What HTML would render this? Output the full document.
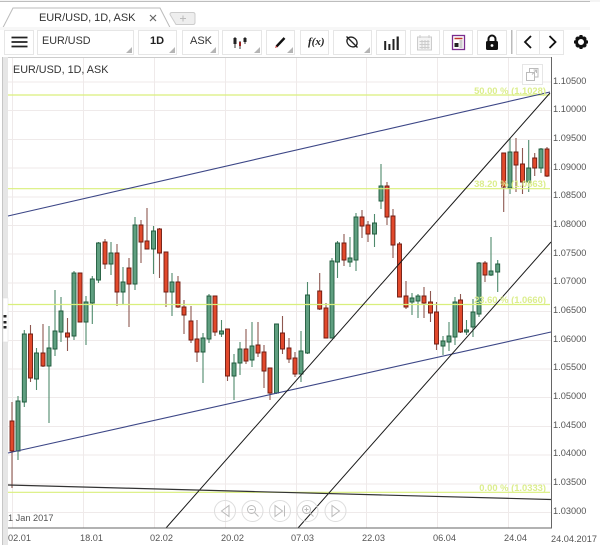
<!DOCTYPE html>
<html><head><meta charset="utf-8"><style>
html,body{margin:0;padding:0;background:#fff}
#p{position:relative;width:600px;height:545px;overflow:hidden;background:#fff;font-family:"Liberation Sans",sans-serif;filter:blur(.3px)}
.b{position:absolute;top:30px;height:23px;border:1px solid #e6e6e6;box-sizing:content-box;background:#fff}
.t{position:absolute;white-space:nowrap;color:#333}
.y{position:absolute;left:553px;font-size:9.2px;line-height:12px;color:#555;letter-spacing:.02px}
.x{position:absolute;top:532px;font-size:9.2px;line-height:12px;color:#555}
.f{position:absolute;font-size:9.4px;line-height:12px;font-weight:bold;color:#dcee8e;white-space:nowrap;text-align:right;right:54px}
svg{position:absolute;left:0;top:0}
</style></head><body><div id="p">
<svg width="600" height="545" viewBox="0 0 600 545">
<rect x="0" y="0" width="600" height="2" fill="#f4f4f4"/><rect x="0" y="1" width="590" height="1" fill="#bdbdbd"/>
<path d="M3 27.500L13 8H160L170 27.500" fill="#fff" stroke="#bbb"/>
<path d="M170 14.500q0-2 2-2H193q2 0 2 2v8q0 2-2 2H176z" fill="#eee" stroke="#ccc"/>
<path d="M180 18.500h6M183 15.500v6" stroke="#bbb" fill="none"/>
<path d="M150 15l6 6M156 15l-6 6" stroke="#666" stroke-width="1.200"/>
<rect x="0" y="27" width="590" height="3" fill="#f7f7f7"/>
<rect x="8" y="57" width="543" height="471" fill="#fff"/>
<rect x="0" y="57" width="2" height="488" fill="#fff"/>
<rect x="2" y="57" width="6" height="488" fill="#e6e6e6"/><rect x="2" y="57" width="1" height="488" fill="#c6c6c6"/>
<rect x="3" y="298" width="5" height="44" fill="#fff" stroke="#ddd" stroke-width=".5"/>
<rect x="3.500" y="315" width="3" height="2.500" fill="#222"/><rect x="3.500" y="321" width="3" height="2.500" fill="#222"/><rect x="3.500" y="326" width="3" height="2.500" fill="#222"/>
<g stroke="#efeaea" fill="none">
<path d="M12.500 57V528M83.500 57V528M154.500 57V528M225.500 57V528M296.500 57V528M366.500 57V528M437.500 57V528M508.500 57V528"/>
<path d="M8 82H551M8 110.500H551M8 139.500H551M8 168H551M8 197H551M8 225.500H551M8 254H551M8 283H551M8 311.500H551M8 340.500H551M8 369H551M8 397.500H551M8 426.500H551M8 455H551M8 484H551M8 512.500H551"/>
</g>
<rect x="8" y="57" width="543" height="1" fill="#ccc"/>
<g>
<path fill="none" stroke="#4f8a6c" stroke-width="1.100" d="M18 396V460M24.300 330V407M36.500 348V390M49 326V423M55 290V356M61 297V342M74 271V340M86 296V345M92.300 276V324M98.500 242V283M111 242V275M123 267V304M135 217V290M153.500 226V274M172 273V316M203 333V383M209 294V343M221.500 320V337M234 354V400M240 342V375M252 322V367M276.500 324V394M301 331V382M307.500 282V354M332 258V338M337.500 241V278M350 237V267M356 213V271M374.500 214V247M381 164V209M412 293V315M418 294V318M443 336V355M449 322V351M455 297V345M466.500 320V335M473 299V337M479 262V317M491 237V276M497.700 260V292M510 138V194M528.700 140V192M541 148V173"/>
<path fill="none" stroke="#8e5850" stroke-width="1.100" d="M12 402V488M30.500 325V382M43 324V367M67.500 318V351M80 273V322M105 239V269M117 244V306M129 258V327M141 220V263M147 208V249M159.500 228V278M166 252V307M178 276V308M184 300V334M191 306V343M197 320V362M215 296V336M227.500 329V381M246 329V364M258 322V357M264 345V388M270 368V400M282.500 316V354M289 338V363M295 352V377M319.700 273V310M326 303V338M344 234V266M362 210V238M368 221V242M387 182V225M393 209V258M399.500 242V297M406 281V309M424 287V318M430.500 291V322M436.500 302V350M460.500 294V333M485 261V282M503.700 153V212M516 138V192M522.500 148V194M534.700 153V176M547 147V177"/>
<path fill="#5f9f80" stroke="#1f5a3c" stroke-width=".9" d="M16 401h4v50h-4zM22.300 334h4v68h-4zM34.500 353h4v26h-4zM47 348h4v18h-4zM53 331h4v18h-4zM59 311h4v21h-4zM72 273h4v63h-4zM84 302h4v20h-4zM90.300 279h4v24h-4zM96.500 243h4v37h-4zM109 253h4v11h-4zM121 282h4v10h-4zM133 225h4v59h-4zM151.500 231h4v18h-4zM170 282h4v10h-4zM201 338h4v14h-4zM207 296h4v43h-4zM219.500 331h4v3h-4zM232 363h4v13h-4zM238 349h4v14h-4zM250 346h4v14h-4zM274.500 324h4v69h-4zM299 351h4v23h-4zM305.500 295h4v58h-4zM330 261h4v77h-4zM335.500 243h4v19h-4zM348 258h4v4h-4zM354 217h4v43h-4zM372.500 223h4v11h-4zM379 186h4v15h-4zM410 298h4v4h-4zM416 296h4v5h-4zM441 341h4v5h-4zM447 336h4v6h-4zM453 302h4v35h-4zM464.500 330h4v2h-4zM471 312h4v15h-4zM477 263h4v51h-4zM489 271h4v4h-4zM495.700 264h4v8h-4zM508 152h4v36h-4zM526.700 168h4v14h-4zM539 149h4v19h-4z"/>
<path fill="#e2492c" stroke="#6e1a10" stroke-width=".9" d="M10 421h4v30h-4zM28.500 334h4v44h-4zM41 353h4v13h-4zM65.500 333h4v4h-4zM78 273h4v49h-4zM103 242h4v22h-4zM115 253h4v39h-4zM127 268h4v16h-4zM139 225h4v17h-4zM145 241h4v8h-4zM157.500 229h4v24h-4zM164 252h4v40h-4zM176 282h4v25h-4zM182 307h4v8h-4zM189 321h4v19h-4zM195 339h4v13h-4zM213 296h4v36h-4zM225.500 329h4v47h-4zM244 349h4v12h-4zM256 345h4v8h-4zM262 352h4v19h-4zM268 368h4v25h-4zM280.500 333h4v16h-4zM287 348h4v11h-4zM293 358h4v16h-4zM317.700 291h4v18h-4zM324 308h4v30h-4zM342 243h4v17h-4zM360 217h4v9h-4zM366 225h4v9h-4zM385 186h4v31h-4zM391 216h4v29h-4zM397.500 244h4v53h-4zM404 296h4v11h-4zM422 296h4v7h-4zM428.500 302h4v11h-4zM434.500 312h4v32h-4zM458.500 300h4v32h-4zM483 263h4v12h-4zM501.700 153h4v34h-4zM514 152h4v13h-4zM520.500 164h4v18h-4zM532.700 158h4v10h-4zM545 149h4v27h-4z"/>
</g>
<path d="M8 95H550M8 188.700H550M8 304.500H550M8 492.300H550" stroke="#d9ef7c" stroke-width="1.200" fill="none"/>
<path d="M8 216L550 92M8 453L551 332" stroke="#3c4686" stroke-width="1.100" fill="none"/>
<path d="M166 528L550 93M298 528L551 242" stroke="#1a1a1a" stroke-width="1" fill="none"/>
<path d="M8 485L551 499.500" stroke="#333" stroke-width="1.200" fill="none"/>
<path d="M551.500 57V528M8 528H552" stroke="#666" stroke-width="1" fill="none"/>
<g fill="none" stroke="#ddd" stroke-width="1">
<circle cx="225" cy="511" r="10.500"/><circle cx="252.500" cy="511" r="10.500"/><circle cx="280" cy="511" r="10.500"/><circle cx="307.500" cy="511" r="10.500"/><circle cx="335.500" cy="511" r="10.500"/>
</g>
<g fill="none" stroke="#bbb" stroke-width="1">
<path d="M229 505.500v11l-7.500-5.500z"/>
<circle cx="251.500" cy="509.500" r="4"/><path d="M254.500 512.500l4 4M249.500 509.500h4"/>
<path d="M275 505.500v11l7.500-5.500zM284.500 505.500v11"/>
<circle cx="306.500" cy="509.500" r="4"/><path d="M309.500 512.500l4 4M304.500 509.500h4M306.500 507.500v4"/>
<path d="M332 505.500v11l7.500-5.500z"/>
</g>
<rect x="522.500" y="64.500" width="20" height="20" fill="#fff" fill-opacity=".8" stroke="#e6e6e6"/>
<path d="M526.500 72.500h8v8h-8zM529.500 72.500v-4h8.500v8.500h-3.500M532 74.500l4-4M533.500 70h3v3" fill="none" stroke="#bbb"/>
</svg>
<div class="b" style="left:4px;width:28px"></div>
<div class="b" style="left:37px;width:95px"></div>
<div class="b" style="left:138px;width:37px"></div>
<div class="b" style="left:182px;width:35px"></div>
<div class="b" style="left:222px;width:38px"></div>
<div class="b" style="left:266px;width:27px"></div>
<div class="b" style="left:300px;width:27px"></div>
<div class="b" style="left:333px;width:37px"></div>
<div class="b" style="left:376px;width:28px"></div>
<div class="b" style="left:410px;width:28px"></div>
<div class="b" style="left:443px;width:28px"></div>
<div class="b" style="left:477px;width:28px"></div>
<div class="b" style="left:516px;width:22px"></div>
<div class="b" style="left:539px;width:23px"></div>
<svg width="600" height="60" viewBox="0 0 600 60">
<path d="M11.500 37.500h16M11.500 42h16M11.500 46.500h16" stroke="#222" stroke-width="1.700" fill="none"/>
<g fill="#b5b5b5"><path d="M132 47v6h-6zM175 47v6h-6zM216 47v6h-6zM260 47v6h-6zM293 47v6h-6zM370 47v6h-6z"/></g>
<path d="M235 37v11M240 41v8M245 37v7" stroke="#333" stroke-width="1"/>
<path d="M233.500 38h3v6h-3zM243.500 38h3v4h-3z" fill="#222"/><rect x="239" y="42" width="2" height="4" fill="#922"/>
<path d="M276.500 46.500L284.500 38" stroke="#111" stroke-width="2.400"/>
<path d="M275 48l1-2.500 1.500 1.500z" fill="#c33"/>
<g fill="none" stroke="#222" stroke-width="1.300"><ellipse cx="352" cy="42" rx="5.500" ry="4.500" transform="rotate(40 352 42)"/><path d="M346.500 36.500l11 11"/></g>
<path d="M384.200 41h2v9h-2zM388.400 44h2v6h-2zM392.500 39h2v11h-2zM396.600 36.500h2.200V50h-2.200z" fill="#222"/>
<rect x="417.500" y="37" width="14" height="13" fill="#f4f4f4" stroke="#ccc"/><path d="M420 35v3M429 35v3M419.500 41.500h10M419.500 44.500h10M419.500 47.500h10M422 40v9M425 40v9M428 40v9" stroke="#ccc" fill="none"/>
<rect x="452.500" y="35.500" width="12" height="14" fill="#fff" stroke="#7a2d8e" stroke-width="1.300"/>
<path d="M454.500 38.500h8" stroke="#c0392b" stroke-width="1.500"/><rect x="454.500" y="43" width="4" height="4" fill="#222"/><path d="M459.500 41h3M459.500 43h3M459.500 45h3M459.500 47h3" stroke="#777" stroke-width=".8"/>
<path d="M488.500 42v-3a3.500 3.500 0 0 1 7 0v3" fill="none" stroke="#111" stroke-width="2"/>
<rect x="486" y="41" width="12" height="9" rx="1.500" fill="#111"/><circle cx="492" cy="45.500" r="1.400" fill="#fff"/>
<rect x="511" y="30" width="1.500" height="24" fill="#bbb"/>
<path d="M531 36l-6 6 6 6M549.500 36l6 6-6 6" fill="none" stroke="#111" stroke-width="1.800"/>
<g transform="translate(581 42)"><circle r="4.500" fill="none" stroke="#111" stroke-width="3"/>
<path d="M-1.500-7h3v3h-3zM-1.500 4h3v3h-3zM-7-1.500h3v3h-3zM4-1.500h3v3H4zM-5.800-3.700l2-2 2 2-2 2zM3.700-5.800l2 2-2 2-2-2zM-3.700 5.800l-2-2 2-2 2 2zM5.800 3.700l-2 2-2-2 2-2z" fill="#111"/></g>
</svg>
<div class="t" style="left:39px;top:12px;font-size:11px;line-height:13px;letter-spacing:-.05px">EUR/USD, 1D, ASK</div>
<div class="t" style="left:42px;top:35px;font-size:10.800px;line-height:13px">EUR/USD</div>
<div class="t" style="left:150px;top:35px;font-size:11px;line-height:13px;font-weight:bold;color:#222">1D</div>
<div class="t" style="left:190px;top:35px;font-size:11px;line-height:13px">ASK</div>
<div class="t" style="left:308px;top:35px;font-family:'Liberation Serif',serif;font-style:italic;font-weight:bold;font-size:11px;line-height:14px;color:#222">f(x)</div>
<div class="t" style="left:13px;top:64px;font-size:10.800px;line-height:13px">EUR/USD, 1D, ASK</div>
<div class="f" style="top:85px">50.00 % (1.1028)</div>
<div class="f" style="top:178px">38.20 % (1.0863)</div>
<div class="f" style="top:294px">23.60 % (1.0660)</div>
<div class="f" style="top:482px">0.00 % (1.0333)</div>
<div class="y" style="top:75px">1.10500</div>
<div class="y" style="top:103px">1.10000</div>
<div class="y" style="top:132px">1.09500</div>
<div class="y" style="top:161px">1.09000</div>
<div class="y" style="top:189px">1.08500</div>
<div class="y" style="top:218px">1.08000</div>
<div class="y" style="top:247px">1.07500</div>
<div class="y" style="top:275px">1.07000</div>
<div class="y" style="top:304px">1.06500</div>
<div class="y" style="top:333px">1.06000</div>
<div class="y" style="top:361px">1.05500</div>
<div class="y" style="top:390px">1.05000</div>
<div class="y" style="top:419px">1.04500</div>
<div class="y" style="top:447px">1.04000</div>
<div class="y" style="top:476px">1.03500</div>
<div class="y" style="top:505px">1.03000</div>
<div class="x" style="left:8px;top:512px">1 Jan 2017</div>
<div class="x" style="left:8px">02.01</div>
<div class="x" style="left:80px">18.01</div>
<div class="x" style="left:150px">02.02</div>
<div class="x" style="left:221px">20.02</div>
<div class="x" style="left:291px">07.03</div>
<div class="x" style="left:362px">22.03</div>
<div class="x" style="left:433px">06.04</div>
<div class="x" style="left:504px">24.04</div>
<div class="x" style="left:551px;top:533px">24.04.2017</div>
</div></body></html>
